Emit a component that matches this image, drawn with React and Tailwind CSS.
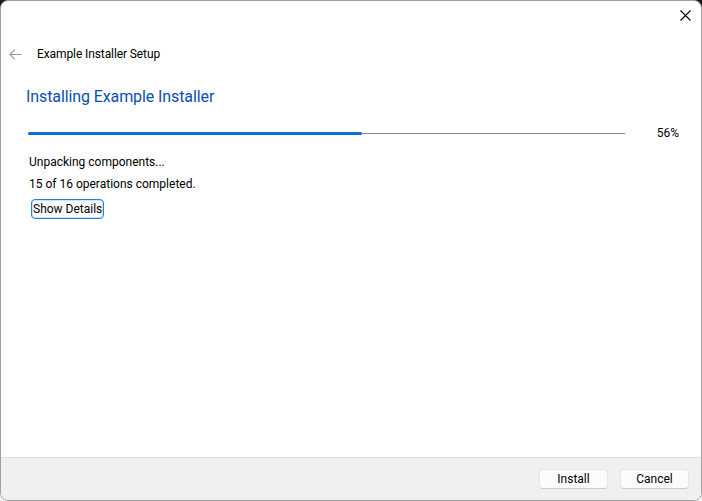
import React from "react";

const ui = { fontFamily: 'Roboto, "Noto Sans", Arial, sans-serif' };

const App = () => {
  const percent = 56;
  return (
    <div
      className="w-[702px] h-[501px] bg-[linear-gradient(#1c1c1c_0%,#1c1c1c_50%,#f3f3f3_50%)]"
      style={ui}>
      <div className="w-full h-full bg-white rounded-[8px] border border-[#a0a0a0] flex flex-col overflow-hidden">
        <div className="flex justify-end pt-[9px] pr-[10px] h-[41px]">
          <svg width="11" height="11" viewBox="0 0 11 11" className="text-black">
            <path d="M0.5 0.5 L10.5 10.5 M10.5 0.5 L0.5 10.5" stroke="currentColor" strokeWidth="1.1" />
          </svg>
        </div>
        <div className="flex items-center h-[24px] pl-[8px]">
          <svg width="13" height="11" viewBox="0 0 13 11" className="text-[#9a9a9a]">
            <path d="M12.5 5.5 H1 M5.8 0.6 L1 5.5 L5.8 10.4" stroke="currentColor" strokeWidth="1.2" fill="none" />
          </svg>
          <span className="ml-[15px] text-[12px] tracking-[-0.1px] text-black">Example Installer Setup</span>
        </div>
        <div className="pl-[25px] mt-[21px] text-[16px] tracking-[-0.1px] text-[#0b4fb1] leading-[20px]">
          Installing Example Installer
        </div>
        <div className="flex items-center mt-[17px] pl-[27px] pr-[22px]">
          <div className="relative w-[597px] h-[3px] flex items-center">
            <div className="w-full h-[1px] bg-[#8a8a8a]" />
            <div
              className="absolute left-0 top-0 h-[3px] rounded-full bg-[#0a6fd0]"
              style={{ width: `${percent}%` }}
            />
          </div>
          <span className="ml-auto text-[12px] text-black">{percent}%</span>
        </div>
        <div className="pl-[28px] mt-[9px] text-[12px] text-black leading-[22px]">
          <div>Unpacking components...</div>
          <div>15 of 16 operations completed.</div>
        </div>
        <div className="pl-[30px] mt-[1px]">
          <button className="h-[20px] px-[1px] text-[12px] leading-[16px] text-black border border-[#2a7fd4] rounded-[4px] bg-white shadow-[inset_0_0_0_1px_#cfe3f7]">
            Show Details
          </button>
        </div>
        <div className="flex-1" />
        <div className="h-[43px] bg-[#f0f0f0] border-t border-[#dcdcdc] flex items-center justify-end gap-[12px] pr-[12px]">
          <button className="w-[69px] h-[20px] text-[12px] text-black bg-[#fbfbfb] border border-[#e5e5e5] border-b-[#cccccc] rounded-[4px]">
            Install
          </button>
          <button className="w-[69px] h-[20px] text-[12px] text-black bg-[#fbfbfb] border border-[#e5e5e5] border-b-[#cccccc] rounded-[4px]">
            Cancel
          </button>
        </div>
      </div>
    </div>
  );
};

export default App;
